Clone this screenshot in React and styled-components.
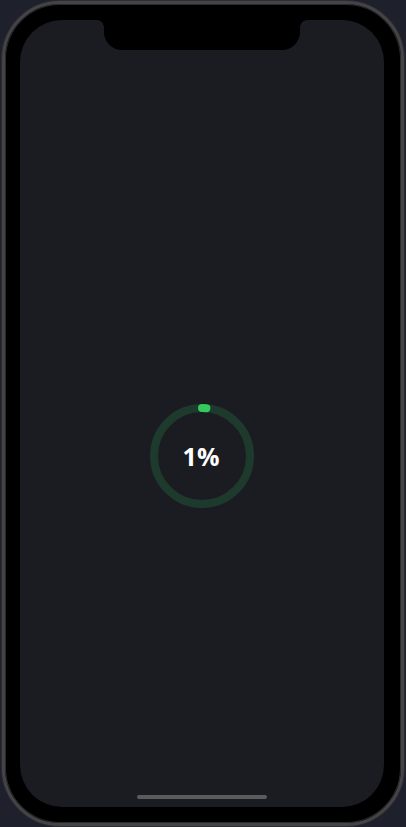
import styled, { createGlobalStyle } from "styled-components";

const GlobalStyle = createGlobalStyle`
  html, body {
    margin: 0;
    padding: 0;
    background: #1e202b;
  }
  body {
    font-family: "Open Sans", "Noto Sans", sans-serif;
  }
`;

const Page = styled.div`
  width: 406px;
  height: 827px;
  padding: 1px 2px;
  box-sizing: border-box;
`;

const Phone = styled.div`
  width: 402px;
  height: 825px;
  box-sizing: border-box;
  border: 3px solid #444447;
  border-radius: 58px;
  background: #000;
  padding: 16px 0 0 15px;
  box-shadow: inset 0 0 0 1px #2a2a2c, 0 0 0 1px #2c2d33;
`;

const Screen = styled.div`
  position: relative;
  width: 364px;
  height: 787px;
  background: #1b1c22;
  border-radius: 42px;
  display: flex;
  flex-direction: column;
  overflow: hidden;
`;

const Notch = styled.div`
  position: absolute;
  top: 0;
  left: 84px;
  width: 196px;
  height: 30px;
  background: #000;
  border-radius: 0 0 18px 18px;

  &::before,
  &::after {
    content: "";
    position: absolute;
    top: 0;
    width: 7px;
    height: 7px;
    background: radial-gradient(circle at var(--cx) 7px, transparent 6.5px, #000 7px);
  }
  &::before {
    left: -7px;
    --cx: 0;
  }
  &::after {
    right: -7px;
    --cx: 7px;
  }
`;

const Main = styled.div`
  flex: 1;
  display: flex;
  justify-content: center;
  align-items: flex-start;
  padding-top: 384px;
`;

const RingWrap = styled.div`
  position: relative;
  width: 104px;
  height: 104px;
  display: flex;
  align-items: center;
  justify-content: center;
`;

const RingSvg = styled.svg`
  position: absolute;
  inset: 0;
  transform: rotate(-90deg);
`;

const Percent = styled.span`
  font-family: "Open Sans", "Noto Sans", sans-serif;
  font-weight: 700;
  font-size: 25px;
  line-height: 1;
  color: #ffffff;
  margin-left: -2px;
`;

const HomeBar = styled.div`
  align-self: center;
  width: 130px;
  height: 4px;
  border-radius: 2px;
  background: #5b5b5e;
  margin-bottom: 8px;
`;

const ProgressRing = ({ value }) => {
  const r = 48;
  const c = 2 * Math.PI * r;
  return (
    <RingWrap>
      <RingSvg width="104" height="104" viewBox="0 0 104 104">
        <circle cx="52" cy="52" r={r} fill="none" stroke="#1d3a2c" strokeWidth="8" />
        <circle
          cx="52"
          cy="52"
          r={r}
          fill="none"
          stroke="#34c95c"
          strokeWidth="8"
          strokeLinecap="round"
          strokeDasharray={`${(c * value) / 100 + 1.5} ${c}`}
        />
      </RingSvg>
      <Percent>{value}%</Percent>
    </RingWrap>
  );
};

export default function App() {
  return (
    <>
      <GlobalStyle />
      <Page>
        <Phone>
          <Screen>
            <Notch />
            <Main>
              <ProgressRing value={1} />
            </Main>
            <HomeBar />
          </Screen>
        </Phone>
      </Page>
    </>
  );
}
